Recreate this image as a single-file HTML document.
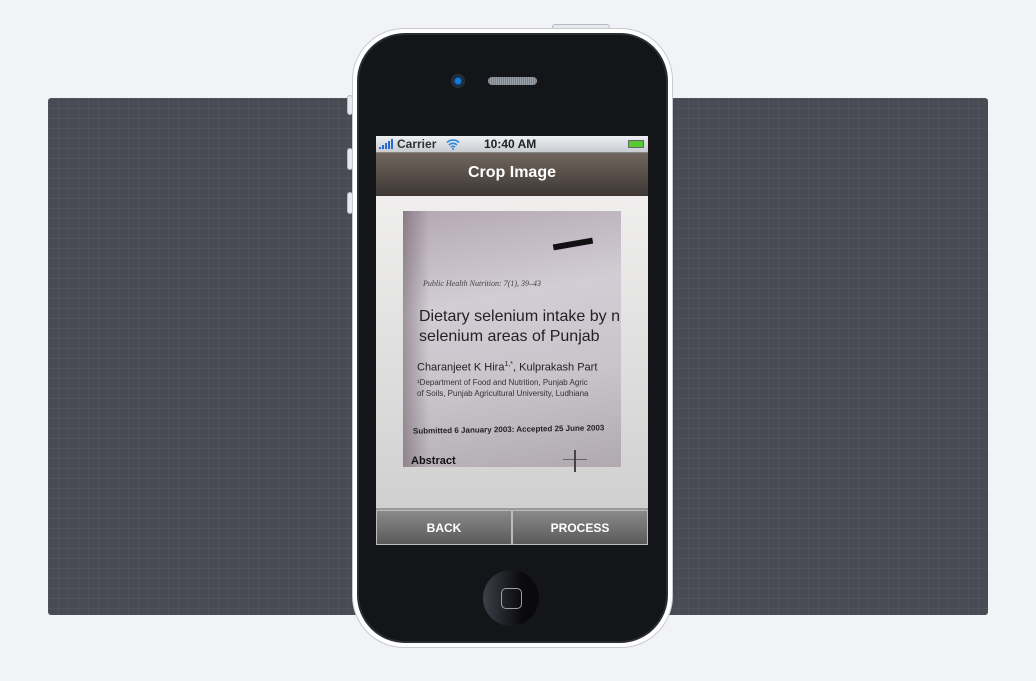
<!DOCTYPE html>
<html><head><style>
*{margin:0;padding:0;box-sizing:border-box}
body{width:1036px;height:681px;background:#f2f3f7;position:relative;overflow:hidden;font-family:"Liberation Sans",sans-serif}
.panel{position:absolute;left:48px;top:98px;width:940px;height:517px;background-color:#4a4a55;border-radius:3px;
background-image:linear-gradient(rgba(255,255,255,.04) 1px,transparent 1px),linear-gradient(90deg,rgba(255,255,255,.04) 1px,transparent 1px);background-size:10px 10px}
.btnside{position:absolute;background:#e8e9ee;border:1px solid #b8bac2}
.phone{position:absolute;left:352px;top:28px;width:321px;height:620px;border-radius:52px;background:#fff;border:1px solid #c8cad2}
.inner{position:absolute;left:4px;top:4px;width:311px;height:610px;border-radius:48px;background:#131519;border:2px solid #2a2d33}
.screen{position:absolute;left:376px;top:136px;width:272px;height:409px;background:#d6d6d6;overflow:hidden}
.status{height:16px;background:linear-gradient(#eef0f2,#c8ccd0);font-size:12px;font-weight:bold;color:#222;position:relative}
.nav{height:44px;background:linear-gradient(#70665e,#3e3734);color:#fff;font-weight:bold;font-size:16px;text-align:center;line-height:40px;border-top:1px solid #888}
.content{height:312px;background:linear-gradient(#f0efee,#d0d0d0);position:relative}
.img{position:absolute;left:27px;top:15px;width:218px;height:256px;background:linear-gradient(90deg,rgba(60,40,50,.35),transparent 12%),linear-gradient(170deg,#b4a8b4,#d2cdd4 35%,#c8c4ca 65%,#b0aab0);overflow:hidden;color:#222}
.btns{height:37px;display:flex;border-top:2px solid #9a9a9a}
.btns div{flex:1;background:linear-gradient(#8a8a8a,#5a5a5a);color:#fff;font-size:12px;font-weight:bold;text-align:center;line-height:35px;border:1px solid #bbb}
.bar{position:absolute;bottom:3px;width:2px;background:#2a6ad0}
</style></head><body>
<div class="panel"></div>
<div class="btnside" style="left:552px;top:24px;width:58px;height:6px;border-radius:3px"></div>
<div class="btnside" style="left:347px;top:95px;width:6px;height:20px;border-radius:3px"></div>
<div class="btnside" style="left:347px;top:148px;width:6px;height:22px;border-radius:3px"></div>
<div class="btnside" style="left:347px;top:192px;width:6px;height:22px;border-radius:3px"></div>
<div class="phone"><div class="inner"></div></div>
<div style="position:absolute;left:451px;top:74px;width:14px;height:14px;border-radius:50%;background:radial-gradient(#1a7ad0 25%,#0b2a4a 45%,#2a2e36 60%)"></div>
<div style="position:absolute;left:488px;top:77px;width:49px;height:8px;border-radius:4px;background:repeating-linear-gradient(90deg,#9aa0a8 0 1px,#7a8088 1px 2px)"></div>
<div style="position:absolute;left:483px;top:570px;width:56px;height:56px;border-radius:50%;background:linear-gradient(90deg,#3c4048,#0a0a0c 70%)"></div>
<div style="position:absolute;left:501px;top:588px;width:21px;height:21px;border-radius:5px;border:1.5px solid #9aa0ac"></div>
<div class="screen">
 <div class="status">
  <div class="bar" style="left:3px;height:2px"></div><div class="bar" style="left:6px;height:4px"></div><div class="bar" style="left:9px;height:6px"></div><div class="bar" style="left:12px;height:8px"></div><div class="bar" style="left:15px;height:10px"></div>
  <span style="position:absolute;left:21px;top:1px;color:#333">Carrier</span>
  <svg style="position:absolute;left:70px;top:2px" width="14" height="12" viewBox="0 0 14 12"><path d="M1 4.5a8.5 8.5 0 0 1 12 0M3 7a5.5 5.5 0 0 1 8 0M5 9.3a2.6 2.6 0 0 1 4 0" stroke="#2a8ae0" stroke-width="1.6" fill="none"/><circle cx="7" cy="11" r="1" fill="#2a8ae0"/></svg>
  <span style="position:absolute;left:108px;top:1px">10:40 AM</span>
  <span style="position:absolute;left:252px;top:4px;width:16px;height:8px;background:#5c3;border:1px solid #666"></span>
 </div>
 <div class="nav">Crop Image</div>
 <div class="content">
  <div class="img">
   <div style="position:absolute;left:150px;top:30px;width:40px;height:6px;background:#111;transform:rotate(-10deg)"></div>
   <div style="position:absolute;left:20px;top:68px;font-size:8px;font-style:italic;font-family:'Liberation Serif',serif;color:#444">Public Health Nutrition: 7(1), 39–43</div>
   <div style="position:absolute;left:16px;top:96px;font-size:16px;white-space:nowrap;line-height:20px;color:#222">Dietary selenium intake by n<br>selenium areas of Punjab</div>
   <div style="position:absolute;left:14px;top:150px;font-size:11px;white-space:nowrap;color:#222">Charanjeet K Hira<sup style="font-size:7px">1,*</sup>, Kulprakash Part</div>
   <div style="position:absolute;left:14px;top:166px;font-size:8px;white-space:nowrap;line-height:11px;color:#333">¹Department of Food and Nutrition, Punjab Agric<br>of Soils, Punjab Agricultural University, Ludhiana</div>
   <div style="position:absolute;left:10px;top:214px;font-size:8px;font-weight:bold;white-space:nowrap;transform:rotate(-1deg);color:#222">Submitted 6 January 2003: Accepted 25 June 2003</div>
   <div style="position:absolute;left:8px;top:244px;font-size:11px;font-weight:bold;color:#111">Abstract</div>
   <div style="position:absolute;left:160px;top:248px;width:24px;height:1px;background:#666"></div>
  </div>
  <div style="position:absolute;left:198px;top:254px;width:2px;height:22px;background:#444"></div>
 </div>
 <div class="btns"><div>BACK</div><div>PROCESS</div></div>
</div>
</body></html>
